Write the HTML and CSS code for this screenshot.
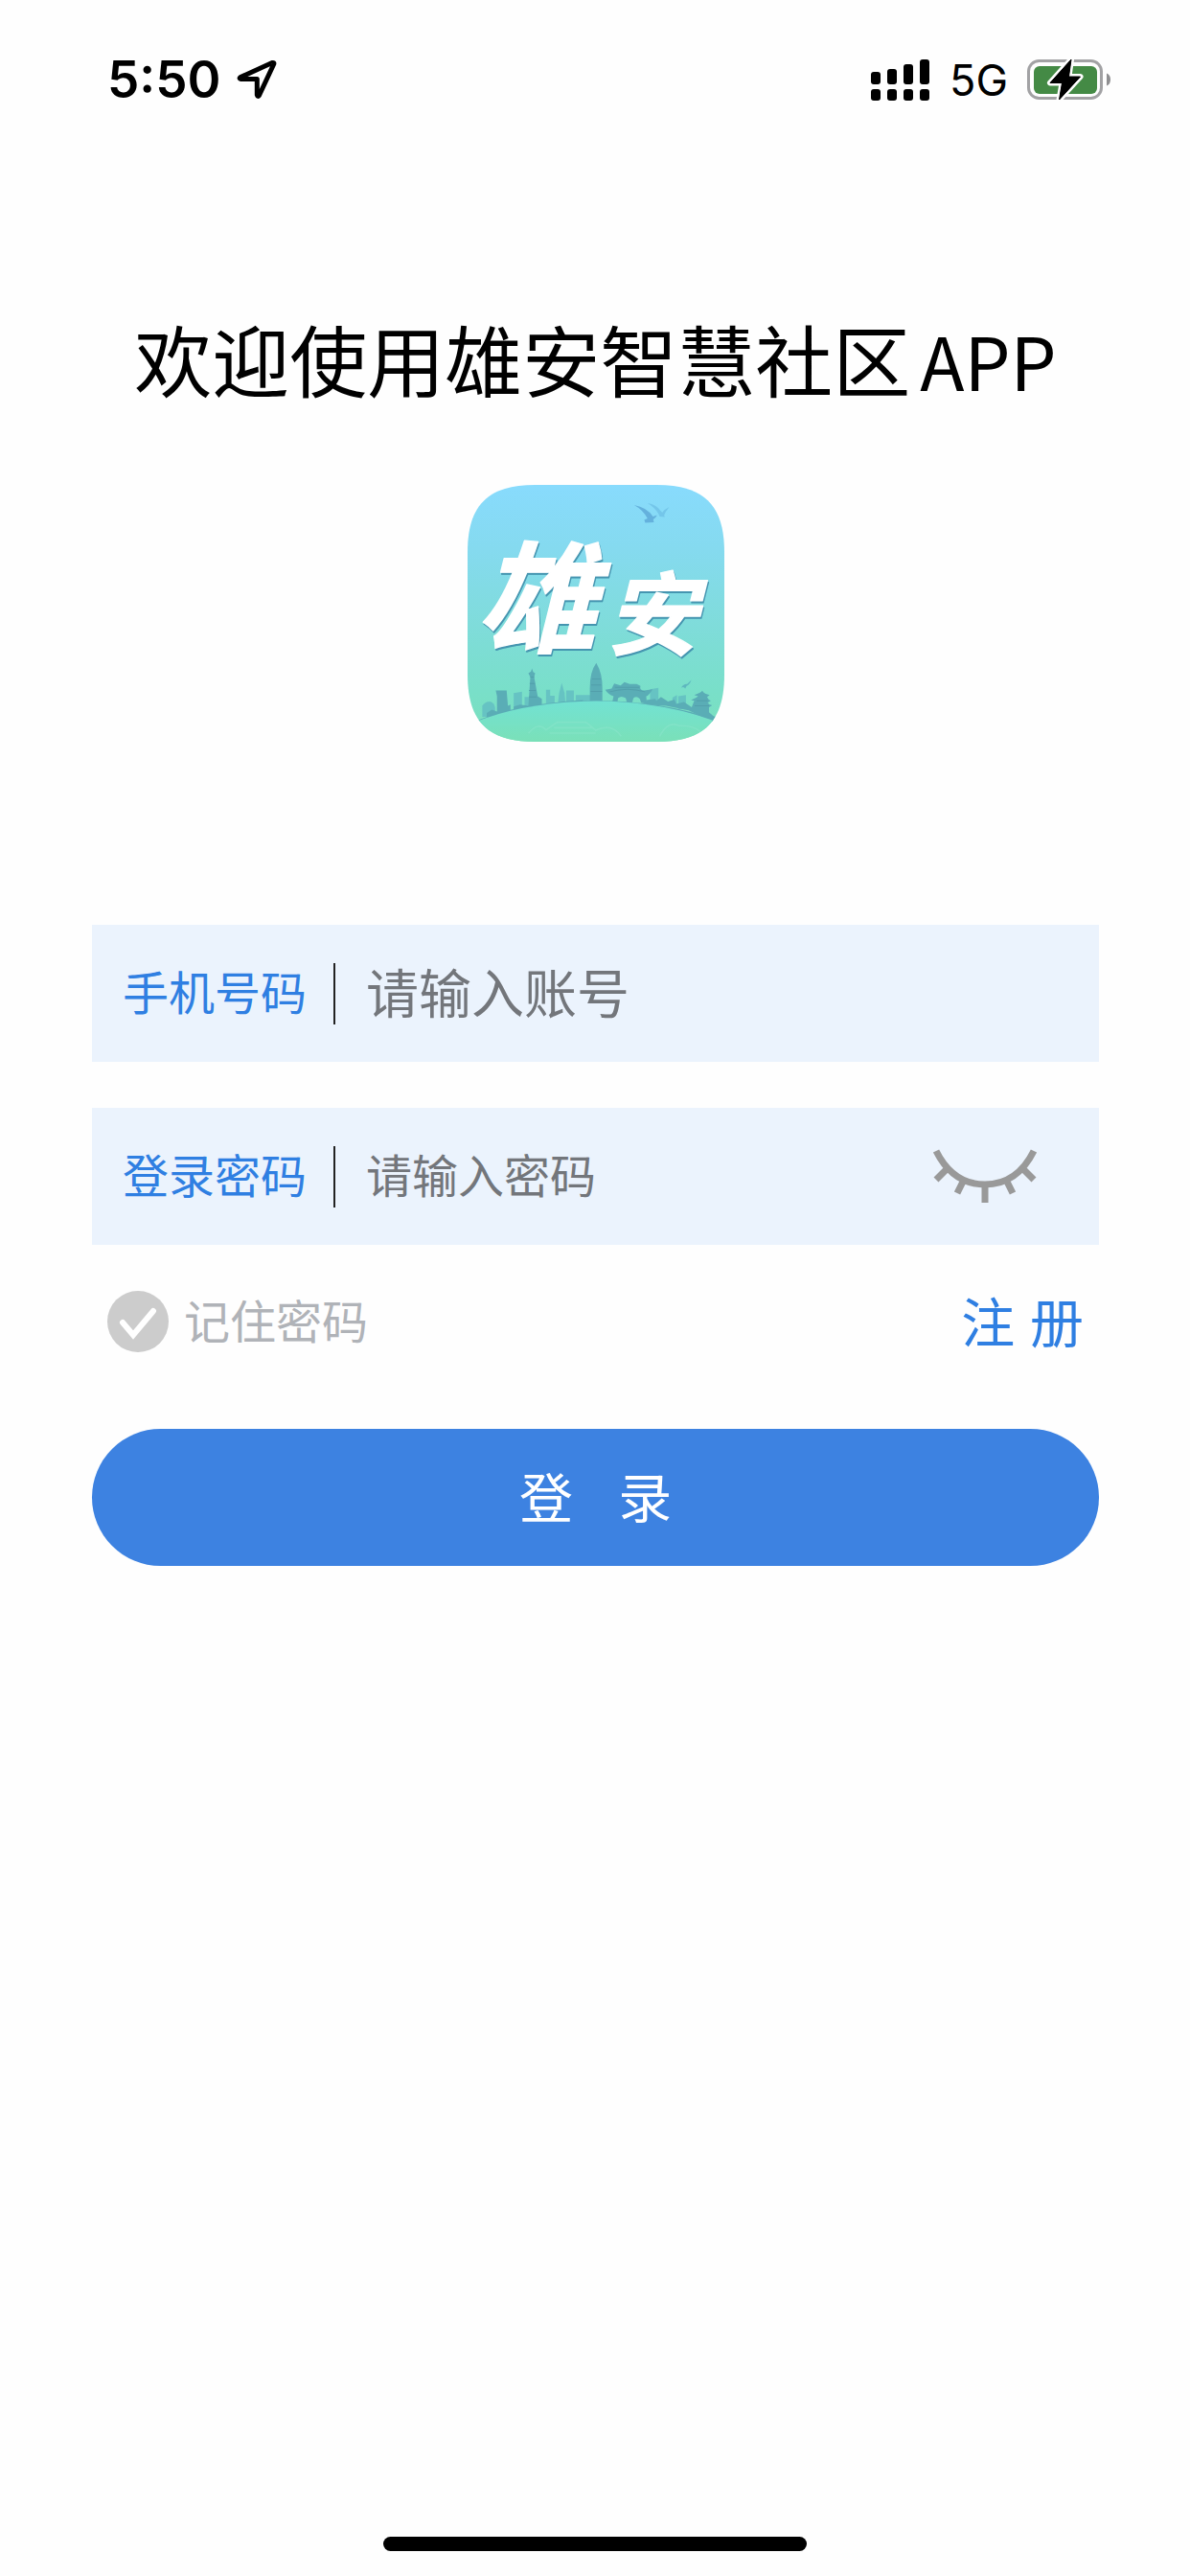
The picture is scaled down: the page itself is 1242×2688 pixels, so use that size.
FILE: index.html
```html
<!DOCTYPE html>
<html lang="zh-CN">
<head>
    <meta charset="UTF-8">
    <meta name="viewport" content="width=device-width, initial-scale=1.0">
    <title>雄安智慧社区</title>
    <link rel="stylesheet" href="styles.css">
</head>
<body>
    <header class="status-bar">
        <div class="status-left">
            <span class="clock">5:50</span>
            <svg class="location-icon" viewBox="0 0 42 42">
                <path d="M4 18.500L37 3.500Q39.500 3 38.700 5L23.500 37.500Q22 39.500 21.300 37V20.500H4.500Q2 20 4 18.500Z" fill="none" stroke="#000" stroke-width="5" stroke-linejoin="round"/>
            </svg>
        </div>
        <div class="status-right">
            <svg class="signal-icon" viewBox="0 0 62 44">
                <rect x="0" y="14" width="10" height="13" rx="3"/>
                <rect x="17" y="11" width="10" height="16" rx="3"/>
                <rect x="34" y="6" width="10" height="21" rx="3"/>
                <rect x="51" y="1" width="10" height="26" rx="3"/>
                <rect x="0" y="32" width="10" height="12" rx="3"/>
                <rect x="17" y="32" width="10" height="12" rx="3"/>
                <rect x="34" y="32" width="10" height="12" rx="3"/>
                <rect x="51" y="32" width="10" height="12" rx="3"/>
            </svg>
            <span class="network">5G</span>
            <svg class="battery-icon" viewBox="0 0 88 44">
                <rect x="1.500" y="2.500" width="76" height="39" rx="11" fill="none" stroke="#a2a2a4" stroke-width="3"/>
                <path d="M83 15.500Q87 17 87 22T83 28.500Z" fill="#8f8f91"/>
                <rect x="7" y="8" width="66" height="29" rx="6" fill="#448a45"/>
                <path d="M46 1L24 25.500H36.500L33.500 43L55.500 19H43.500Z" fill="#000" stroke="#fefefe" stroke-width="6" stroke-linejoin="round" paint-order="stroke"/>
                <path d="M46 1L24 25.500H36.500L33.500 43L55.500 19H43.500Z" fill="#000" stroke="#000" stroke-width="1" stroke-linejoin="round"/>
            </svg>
        </div>
    </header>

    <main class="login">
        <h1 class="title">欢迎使用雄安智慧社区<span class="title-app">APP</span></h1>

        <svg class="logo" viewBox="0 0 802 802" role="img" aria-label="雄安">
            <defs>
                <linearGradient id="sky" x1="0" y1="0" x2="0" y2="1">
                    <stop offset="0" stop-color="#88dbfd"/>
                    <stop offset="0.250" stop-color="#85daef"/>
                    <stop offset="0.550" stop-color="#7fdcda"/>
                    <stop offset="0.800" stop-color="#79dfc9"/>
                    <stop offset="1" stop-color="#7ae0bb"/>
                </linearGradient>
                <linearGradient id="hill" x1="0" y1="0" x2="0" y2="1">
                    <stop offset="0" stop-color="#72e2d3"/>
                    <stop offset="1" stop-color="#7ae0b8"/>
                </linearGradient>
                <clipPath id="tile">
                    <path d="M210 0H592C745 0 802 70 802 210V592C802 732 745 802 592 802H210C57 802 0 732 0 592V210C0 70 57 0 210 0Z"/>
                </clipPath>
            </defs>
            <g clip-path="url(#tile)">
                <rect width="802" height="802" fill="url(#sky)"/>

                <!-- birds -->
                <path d="M562 57Q590 62 602 80L608 86Q616 76 630 69Q618 84 614 94L616 100L600 99L596 90Q584 70 562 57Z" fill="#74c6ea"/>
                <path d="M520 63Q560 70 579 99L592 94Q587 104 580 108L582 117L555 118L552 109L562 105Q548 78 520 63Z" fill="#64b1dd"/>
                <path d="M667 633Q676 620 686 622L699 609Q694 624 684 628L680 636Q676 628 667 633Z" fill="#5fb7bf"/>

                <!-- distant buildings -->
                <g fill="#66c3c3">
                    <path d="M46 724V690Q55 676 70 676Q84 680 86 696V724Z"/>
                    <path d="M144 700V650L170 646V694Z"/>
                    <path d="M178 700V662H196V690Z"/>
                    <path d="M245 684V640H258V658H272V684Z"/>
                    <path d="M282 684L286 650L294 618L303 650L306 684Z"/>
                    <path d="M308 680V642H332V680Z"/>
                    <path d="M338 680V656H386V680Z"/>
                    <path d="M570 676V638L596 634V680Z"/>
                    <path d="M640 690V664L654 656V690Z"/>
                    <path d="M658 700V660L682 656V700Z"/>
                </g>

                <!-- skyline -->
                <g fill="#5aadb6">
                    <path d="M60 726V712L76 702L92 708V660L88 642H122L126 690L134 686V712Z"/>
                    <path d="M144 710V692L164 686L190 690L196 600L190 588L198 583L201 573L205 584L211 588L208 600L219 660L232 668V690L144 702Z"/>
                    <path d="M382 680V636Q381 585 402 556Q422 590 421 636V680Z"/>
                    <path d="M268 682L300 676L360 672V682Z"/>
                    <path d="M430 640L450 636L458 620L478 626L490 616L506 622H528L540 628Q536 642 552 642L578 638Q566 658 558 660L560 684L542 680L538 668Q528 658 518 666L514 680H498L494 666Q480 656 470 666L468 678H452L456 660Q440 656 430 640Z"/>
                    <path d="M558 686V672L586 668L590 674L604 662L626 676L646 670L652 684L676 678L700 694L708 674L698 672Q716 664 720 660L708 656Q728 650 733 643Q740 654 756 656L748 662Q752 672 760 674L750 680Q754 688 764 688L754 694V710L768 722L780 726L766 740L690 704L620 690Z"/>
                    <path d="M30 736Q180 674 401 674Q620 674 780 736L766 738Q620 680 401 678Q190 680 44 738Z"/>
                </g>
                <g fill="none" stroke="#529fab" stroke-width="3">
                    <path d="M196 600H208M194 620H210M192 642H213M192 662H216"/>
                    <path d="M386 625H418M384 645H420M388 606H416"/>
                    <path d="M444 646Q500 630 554 646M460 632H536M715 674H750M709 690H754"/>
                </g>

                <!-- hill -->
                <path d="M0 750Q170 677 401 675Q630 677 802 750V802H0Z" fill="url(#hill)"/>
                <path d="M190 776Q220 738 245 765L280 741H370L400 766Q450 742 480 785M256 775H400M270 758H392M600 785Q625 736 660 752Q710 750 730 775" fill="none" stroke="#8be5cb" stroke-width="5" opacity="0.500"/>

                <g class="logo-text">
                    <text class="logo-xiong" x="28" y="494">雄</text>
                    <text class="logo-an" x="434" y="508">安</text>
                </g>
            </g>
        </svg>

        <form class="login-form">
            <div class="field">
                <label for="phone">手机号码</label>
                <input class="phone" id="phone" type="tel" placeholder="请输入账号">
            </div>
            <div class="field">
                <label for="password">登录密码</label>
                <input id="password" type="password" placeholder="请输入密码">
                <button class="toggle-password" type="button" aria-label="显示密码">
                    <svg viewBox="0 0 110 60">
                        <path d="M4 3C16 27 33 38 55 38S94 27 106 3M15 22L4 33M33 33L26 47M55 38V57M77 33L84 47M95 22L106 33" fill="none" stroke="#999" stroke-width="7"/>
                    </svg>
                </button>
            </div>

            <div class="options">
                <input class="remember" id="remember" type="checkbox">
                <label for="remember">记住密码</label>
                <a class="register" href="#">注 册</a>
            </div>

            <button class="submit" type="submit">登&nbsp;&nbsp;&nbsp;录</button>
        </form>
    </main>

    <div class="home-indicator"></div>
</body>
</html>
```
FILE: styles.css
```css
* {
    box-sizing: border-box;
}

body {
    margin: 0;
    min-height: 100vh;
    display: flex;
    flex-direction: column;
    background-color: #fefefe;
    color: #000;
    font-family: "Inter", "Noto Sans CJK SC", sans-serif;
}

svg {
    display: block;
}

input,
button {
    margin: 0;
    padding: 0;
    border: none;
    background: none;
    font-family: inherit;
}

/* status bar */
.status-bar {
    display: flex;
    align-items: center;
    justify-content: space-between;
    height: 166px;
    padding: 0 82px 0 112px;
}

.status-left,
.status-right {
    display: flex;
    align-items: center;
}

.status-left {
    gap: 16px;
}

.status-right {
    gap: 20px;
}

.clock {
    font-size: 53px;
    font-weight: 600;
}

.location-icon {
    width: 42px;
    height: 42px;
}

.signal-icon {
    width: 62px;
    height: 44px;
}

.network {
    font-size: 45px;
}

.battery-icon {
    width: 88px;
    height: 44px;
}

/* login */
.login {
    display: flex;
    flex-direction: column;
    align-items: center;
    padding: 148px 95px 0 96px;
}

.title {
    margin: 0 0 72px;
    font-family: "Noto Sans CJK SC", sans-serif;
    font-size: 81px;
    font-weight: 400;
    line-height: 118px;
    white-space: nowrap;
}

.title-app {
    margin-left: 10px;
    font-size: 76px;
}

.logo {
    width: 268px;
    height: 268px;
}

.logo-text {
    fill: #fff;
    stroke: #fff;
    stroke-width: 4px;
    stroke-linejoin: round;
    font-family: "Noto Sans CJK SC", sans-serif;
    font-weight: 700;
    font-style: italic;
    filter: drop-shadow(3px 6px 1px #4595b0);
}

.logo-xiong {
    font-size: 376px;
}

.logo-an {
    font-size: 284px;
}

.login-form {
    width: 100%;
    margin-top: 191px;
}

.field {
    display: flex;
    align-items: center;
    height: 143px;
    margin-bottom: 48px;
    padding: 0 64px 0 32px;
    background-color: #ebf3fd;
}

.field label {
    padding-right: 28px;
    color: #2f7fe2;
    font-size: 48px;
    line-height: 64px;
    border-right: 2px solid #222;
}

.field input {
    flex: 1;
    min-width: 0;
    padding-left: 32px;
    font-size: 48px;
    outline: none;
}

.field .phone {
    font-size: 55px;
}

.field input::placeholder {
    color: #73767b;
    opacity: 1;
}

.toggle-password {
    width: 110px;
    height: 60px;
}

.options {
    display: flex;
    align-items: center;
    height: 64px;
    padding: 0 16px;
}

.remember {
    appearance: none;
    width: 64px;
    height: 64px;
    border-radius: 50%;
    background: #ccc url("data:image/svg+xml,%3Csvg xmlns='http://www.w3.org/2000/svg' viewBox='0 0 64 64'%3E%3Cpath d='M16 33L27 46L48 21' fill='none' stroke='white' stroke-width='6' stroke-linecap='round'/%3E%3C/svg%3E");
}

.options label {
    padding: 0 0 6px 16px;
    color: #b0b3b8;
    font-size: 48px;
}

.register {
    margin-left: auto;
    padding-bottom: 6px;
    color: #2f7fe2;
    font-size: 56px;
    text-decoration: none;
}

.submit {
    width: 100%;
    height: 143px;
    margin-top: 80px;
    padding-bottom: 6px;
    border-radius: 72px;
    background-color: #3d82e1;
    color: #fff;
    font-size: 56px;
}

.home-indicator {
    width: 442px;
    height: 15px;
    margin: auto auto 26px;
    border-radius: 8px;
    background-color: #000;
}
```
